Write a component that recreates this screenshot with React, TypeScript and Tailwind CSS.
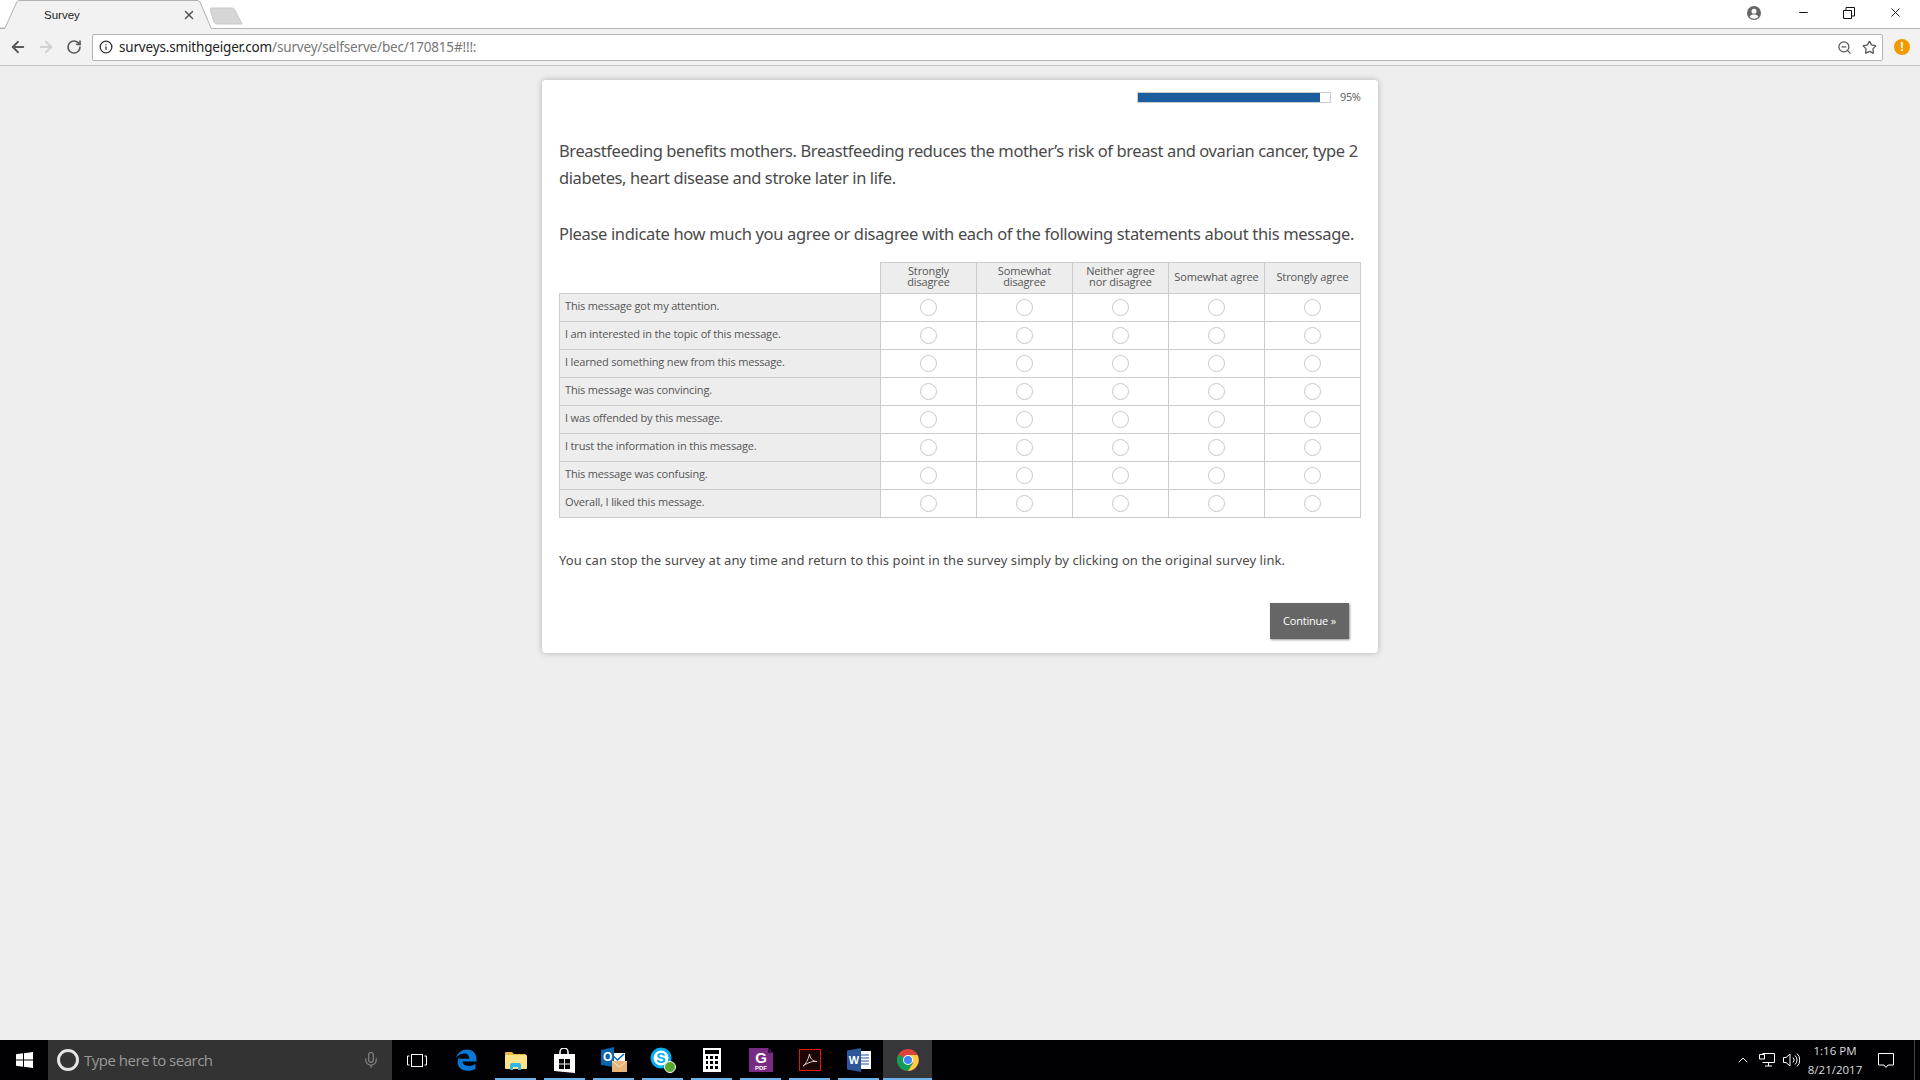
import React from 'react';
import { ArrowLeft, ArrowRight, RotateCw, Info, ZoomOut, Star, X, Minus, Mic, ChevronUp } from 'lucide-react';

const columns = [
  ['Strongly', 'disagree'],
  ['Somewhat', 'disagree'],
  ['Neither agree', 'nor disagree'],
  ['Somewhat agree'],
  ['Strongly agree'],
];

const statements = [
  'This message got my attention.',
  'I am interested in the topic of this message.',
  'I learned something new from this message.',
  'This message was convincing.',
  'I was offended by this message.',
  'I trust the information in this message.',
  'This message was confusing.',
  'Overall, I liked this message.',
];

const WindowsLogo = () => (
  <svg width="17" height="16" viewBox="0 0 17 16" fill="#fff">
    <path d="M0 2.3 7 1.3V7.5H0ZM8 1.2 17 0V7.5H8ZM0 8.5H7V14.7L0 13.7ZM8 8.5H17V16L8 14.8Z" />
  </svg>
);

const EdgeLogo = () => (
  <svg width="22" height="22" viewBox="0 0 22 22">
    <path
      d="M1 9C2.5 3.500 7 .5 12 .5c5.500 0 9.500 4 9.500 9.500v2.500H7.500c.5 4.500 7 6 13 2.500v5c-6 3-14 2.500-17-3-2-3.700-.5-8.500 3-11-1.500 1.500-2 2.500-2.300 3.700h10c.2-3-2-5.200-5-5.200C6 4.500 3 6 1 9Z"
      fill="#0a78d4"
    />
  </svg>
);

const ExplorerIcon = () => (
  <svg width="22" height="19" viewBox="0 0 22 19">
    <path d="M0 2a1 1 0 0 1 1-1h6l2 2h11a1 1 0 0 1 1 1v2H0Z" fill="#e8b93e" />
    <rect y="4" width="22" height="14" rx="1" fill="#fce38a" />
    <path d="M5 19v-5a2 2 0 0 1 2-2h7a2 2 0 0 1 2 2v5h-3v-3H8v3Z" fill="#33b5e5" />
  </svg>
);

const StoreIcon = () => (
  <svg width="21" height="25" viewBox="0 0 21 25">
    <path d="M6 7V4a4 4 0 0 1 8 0v3" fill="none" stroke="#fff" strokeWidth="1.500" />
    <path d="M0 6h21v19l-21-2Z" fill="#fff" />
    <path d="M5 11h5v4.500H5ZM11 11h5v4.500h-5ZM5 16.500h5V21H5ZM11 16.500h5V21h-5Z" fill="#000" />
  </svg>
);

const OutlookIcon = () => (
  <svg width="26" height="26" viewBox="0 0 26 26">
    <rect x="9" y="6" width="15" height="11" fill="#fff" />
    <path d="M10 7l6.500 6L23 7" fill="none" stroke="#0a64ad" strokeWidth="1.500" />
    <path d="M0 3 13 0v20L0 18Z" fill="#0a64ad" />
    <text x="2" y="14" fontSize="12" fontWeight="700" fill="#fff" fontFamily="'Liberation Sans', sans-serif">O</text>
    <rect x="11" y="14" width="15" height="11" fill="#e8b578" />
    <path d="M11 14l7.500 6 7.500-6" fill="none" stroke="#fbe3c2" strokeWidth="1" />
  </svg>
);

const SkypeIcon = () => (
  <div className="relative w-[26px] h-[26px]">
    <svg width="22" height="22" viewBox="0 0 22 22">
      <circle cx="11" cy="11" r="9" fill="#fff" stroke="#00aff0" strokeWidth="3" />
      <text x="11" y="16" fontSize="14" fontWeight="700" textAnchor="middle" fill="#00aff0" fontFamily="'Liberation Sans', sans-serif">S</text>
    </svg>
    <div className="absolute right-0 bottom-0 w-[12px] h-[12px] rounded-full bg-[#5ba82e] border border-white" />
  </div>
);

const CalcIcon = () => (
  <div className="w-[18px] h-[24px] bg-white p-[2px] flex flex-col gap-[2px]">
    <div className="h-[4px] bg-black" />
    <div className="grid grid-cols-3 gap-x-[2px] gap-y-[2px] px-[1px]">
      {Array.from({ length: 9 }).map((_, i) => (
        <div key={i} className="h-[3px] bg-black" />
      ))}
    </div>
  </div>
);

const FoxitIcon = () => (
  <svg width="24" height="24" viewBox="0 0 24 24">
    <path d="M0 0h19l5 5v19H0Z" fill="#7a2b83" />
    <path d="M19 0l5 5h-5Z" fill="#3d1242" />
    <text x="12" y="15" fontSize="15" fontWeight="700" textAnchor="middle" fill="#fff" fontFamily="'Liberation Sans', sans-serif">G</text>
    <text x="12" y="22" fontSize="6" fontWeight="700" textAnchor="middle" fill="#fff" fontFamily="'Liberation Sans', sans-serif">PDF</text>
  </svg>
);

const AcrobatIcon = () => (
  <svg width="22" height="22" viewBox="0 0 22 22">
    <rect x=".5" y=".5" width="21" height="21" fill="#1d0606" stroke="#e0180c" />
    <path d="M4 17c3-2 5-6 6.500-12 .5 4 3 7.500 7.500 7.500-4-.5-8 .5-14 4.500Z" fill="none" stroke="#e8c9c4" strokeWidth="1" />
  </svg>
);

const WordIcon = () => (
  <svg width="24" height="24" viewBox="0 0 24 24">
    <rect x="10" y="3" width="14" height="18" fill="#fff" />
    <path d="M13 7h9M13 10h9M13 13h9M13 16h9" stroke="#2b579a" strokeWidth="1" />
    <path d="M0 2.500 14 0v24L0 21.500Z" fill="#2b579a" />
    <text x="7" y="16" fontSize="11" fontWeight="700" textAnchor="middle" fill="#fff" fontFamily="'Liberation Sans', sans-serif">W</text>
  </svg>
);

const ChromeIcon = () => (
  <svg width="22" height="22" viewBox="0 0 22 22">
    <circle cx="11" cy="11" r="11" fill="#db4437" />
    <path d="M11 11 1.500 5.500A11 11 0 0 0 11 22l5-8Z" fill="#0f9d58" />
    <path d="M11 6h9.500A11 11 0 0 1 11 22l5-8Z" fill="#ffcd40" />
    <circle cx="11" cy="11" r="5" fill="#fff" />
    <circle cx="11" cy="11" r="4" fill="#4285f4" />
  </svg>
);

const ProfileIcon = () => (
  <svg width="14" height="14" viewBox="0 0 14 14">
    <circle cx="7" cy="7" r="7" fill="#666" />
    <circle cx="7" cy="5.200" r="2.500" fill="#fff" />
    <path d="M2.500 10.800C3.500 9 5 8.500 7 8.500s3.500.5 4.500 2.300A5.800 5.800 0 0 1 7 12.800a5.800 5.800 0 0 1-4.500-2Z" fill="#fff" />
  </svg>
);

const taskApps = [
  { key: 'explorer', icon: <ExplorerIcon />, open: true },
  { key: 'store', icon: <StoreIcon />, open: true },
  { key: 'outlook', icon: <OutlookIcon />, open: true },
  { key: 'skype', icon: <SkypeIcon />, open: true },
  { key: 'calc', icon: <CalcIcon />, open: true },
  { key: 'foxit', icon: <FoxitIcon />, open: true },
  { key: 'acrobat', icon: <AcrobatIcon />, open: true },
  { key: 'word', icon: <WordIcon />, open: true },
  { key: 'chrome', icon: <ChromeIcon />, open: true, active: true },
];

const BrowserChrome = () => (
  <div className="font-['Open_Sans',sans-serif]">
    <div className="relative h-[29px] bg-white border-b border-[#b8b8b8] flex items-start">
      <div className="relative w-[212px] h-[29px] shrink-0">
        <svg className="absolute inset-0" width="212" height="29" viewBox="0 0 212 29">
          <path d="M0 28H5L17 1.500Q18 .5 20 .5H197Q199 .5 200 2L211 28" fill="#f2f2f2" stroke="#b0b0b0" />
          <path d="M5 28.500H211" stroke="#f2f2f2" strokeWidth="1.500" />
        </svg>
        <span className="absolute left-[44px] top-[7px] text-[11.500px] text-[#222] font-['Liberation_Sans',sans-serif]">Survey</span>
        <X className="absolute left-[182px] top-[8px] w-[14px] h-[14px] text-[#555]" strokeWidth={2.500} />
      </div>
      <svg className="mt-[7px] -ml-[3px]" width="36" height="18" viewBox="0 0 36 18">
        <path d="M1 2Q1 1 3 1H23Q25 1 26 3L33 17H8Q6 17 5 15Z" fill="#d6d6d6" stroke="#c8c8c8" />
      </svg>
      <div className="ml-auto flex items-center h-[28px]">
        <div className="mr-[36px] -mt-[3px]">
          <ProfileIcon />
        </div>
        <Minus className="w-[13px] h-[13px] text-[#111] mr-[33px] -mt-[3px]" />
        <svg className="mr-[33px] -mt-[3px]" width="12" height="12" viewBox="0 0 12 12" fill="none" stroke="#111">
          <path d="M.5 3.500h8v8h-8ZM3 3.500V.5h8.500V9H8.500" />
        </svg>
        <X className="w-[15px] h-[15px] text-[#111] mr-[17px] -mt-[3px]" strokeWidth={1.500} />
      </div>
    </div>
    <div className="h-[37px] bg-[#f2f2f2] border-b border-[#c4c4c4] flex items-center">
      <div className="w-[92px] shrink-0 flex items-center pl-[9px] gap-[10px]">
        <ArrowLeft className="w-[18px] h-[18px] text-[#5a5a5a]" strokeWidth={2.500} />
        <ArrowRight className="w-[18px] h-[18px] text-[#d0d0d0]" strokeWidth={2.500} />
        <RotateCw className="ml-px w-[16px] h-[16px] text-[#5a5a5a]" strokeWidth={2.500} />
      </div>
      <div className="w-[1791px] h-[27px] bg-white border border-[#b4b4b4] rounded-[2px] flex items-center pl-[6px] pr-[5px]">
        <Info className="w-[14px] h-[14px] text-[#333]" strokeWidth={2.250} />
        <span className="ml-[6px] text-[13.500px] font-['Noto_Sans',sans-serif] tracking-[-0.17px] text-[#222]">
          surveys.smithgeiger.com<span className="text-[#777]">/survey/selfserve/bec/170815#!!!:</span>
        </span>
        <ZoomOut className="ml-auto w-[15px] h-[15px] text-[#555] mr-[10px]" strokeWidth={2} />
        <Star className="w-[15px] h-[15px] text-[#555]" strokeWidth={2} />
      </div>
      <div className="ml-[11px] w-[16px] h-[16px] rounded-full bg-[#f29900] text-white text-[12px] font-bold flex items-center justify-center font-['Liberation_Sans',sans-serif]">!</div>
    </div>
  </div>
);

const SurveyCard = () => (
  <div className="w-[836px] mx-auto mt-[14px] bg-white rounded-[4px] shadow-[0_0_6px_rgba(0,0,0,0.25)] pl-[17px] pr-[16px] pb-[14px] font-['Noto_Sans',sans-serif] text-[#4a4a4a]">
    <div className="flex items-center justify-end h-[35px] pb-[1px] pr-[1px]">
      <div className="w-[194px] h-[11px] border border-[#ccc] bg-white">
        <div className="h-full w-[95%] bg-[#1b5e9e]" />
      </div>
      <span className="ml-[9px] w-[21px] text-[11px] text-[#666] tracking-[-0.4px]">95%</span>
    </div>
    <p className="mt-[22px] -mr-px text-[16.500px] leading-[27px] tracking-[-0.4px]">
      Breastfeeding benefits mothers. Breastfeeding reduces the mother’s risk of breast and ovarian cancer, type 2 diabetes, heart disease and stroke later in life.
    </p>
    <p className="mt-[29px] text-[16.500px] leading-[27px] tracking-[-0.34px]">
      Please indicate how much you agree or disagree with each of the following statements about this message.
    </p>
    <table className="mt-[15px] w-[801px] table-fixed border-collapse text-[11px] text-[#555] font-['Open_Sans',sans-serif]">
      <colgroup>
        <col className="w-[321px]" />
        <col className="w-[96px]" />
        <col className="w-[96px]" />
        <col className="w-[96px]" />
        <col className="w-[96px]" />
        <col className="w-[96px]" />
      </colgroup>
      <thead>
        <tr className="h-[31px]">
          <th />
          {columns.map((lines) => (
            <th key={lines[0] + lines[lines.length - 1]} className="border border-[#ccc] bg-[#ededed] font-normal leading-[11px] tracking-[-0.13px] text-center pt-0 px-0 pb-[4px]">
              {lines.map((line) => (
                <div key={line}>{line}</div>
              ))}
            </th>
          ))}
        </tr>
      </thead>
      <tbody>
        {statements.map((statement) => (
          <tr key={statement} className="h-[28px]">
            <td className="border border-[#ccc] bg-[#ededed] pl-[5px] pb-[2px] tracking-[-0.17px] whitespace-nowrap">{statement}</td>
            {columns.map((lines) => (
              <td key={lines.join(' ')} className="border border-[#ccc] p-0 text-center align-middle">
                <div className="mx-auto w-[17px] h-[17px] rounded-full border border-[#c8c8c8] bg-white" />
              </td>
            ))}
          </tr>
        ))}
      </tbody>
    </table>
    <p className="mt-[29px] text-[13px] leading-[27px] tracking-[0.07px]">
      You can stop the survey at any time and return to this point in the survey simply by clicking on the original survey link.
    </p>
    <div className="flex justify-end mt-[29px] pr-[13px]">
      <button className="w-[79px] h-[36px] bg-[#666] text-white text-[11px] tracking-[-0.2px] shadow-[1px_1px_2px_rgba(0,0,0,0.4)] font-['Open_Sans',sans-serif]">Continue »</button>
    </div>
  </div>
);

const Taskbar = () => (
  <div className="h-[40px] bg-[#010103] flex items-stretch shrink-0 text-white">
    <div className="w-[48px] flex items-center justify-center">
      <WindowsLogo />
    </div>
    <div className="w-[344px] bg-[#333] flex items-center pl-[9px] pr-[12px]">
      <div className="w-[22px] h-[22px] rounded-full border-[3px] border-[#e4e4e4]" />
      <span className="ml-[5px] text-[15px] tracking-[-0.5px] text-[#999] font-['Open_Sans',sans-serif]">Type here to search</span>
      <Mic className="ml-auto w-[18px] h-[18px] text-[#888]" strokeWidth={1.500} />
    </div>
    <div className="w-[49px] flex items-center justify-center">
      <svg width="20" height="13" viewBox="0 0 20 13" fill="none" stroke="#fff">
        <rect x="4.500" y=".5" width="11" height="12" />
        <path d="M2.500 2H.5v9h2M17.500 2h2v9h-2" />
      </svg>
    </div>
    <div className="w-[50px] flex items-center justify-center">
      <EdgeLogo />
    </div>
    {taskApps.map((app) => (
      <div key={app.key} className={`relative w-[49px] flex items-center justify-center ${app.active ? 'bg-[#35373a]' : ''}`}>
        {app.icon}
        <div className={`absolute bottom-0 h-[2px] bg-[#6cb2eb] ${app.active ? 'inset-x-0' : 'inset-x-[4px]'}`} />
      </div>
    ))}
    <div className="ml-auto flex items-center pr-[5px]">
      <ChevronUp className="w-[16px] h-[16px] text-white mr-[8px]" strokeWidth={1.500} />
      <svg className="mr-[8px]" width="16" height="14" viewBox="0 0 16 14" fill="none" stroke="#fff">
        <path d="M3.500 .5H15.500V9.500H3.500M9.500 9.500V13M6 13H13M.5 1.500H5.500V6H.5Z" />
      </svg>
      <svg className="mr-[5px]" width="17" height="14" viewBox="0 0 17 14" fill="none" stroke="#fff">
        <path d="M.5 4.500H3L7 1V13L3 9.500H.5ZM10 4.500a3.500 3.500 0 0 1 0 5M12 2.500a6 6 0 0 1 0 9M14 .5a9 9 0 0 1 0 13" />
      </svg>
      <div className="w-[60px] text-center text-[11.500px] leading-[19px] text-[#ddd] font-['Open_Sans',sans-serif]">
        <div>1:16 PM</div>
        <div>8/21/2017</div>
      </div>
      <svg className="ml-[13px] mr-[20px]" width="16" height="15" viewBox="0 0 16 15" fill="none" stroke="#fff">
        <path d="M.5 .5H15.500V12H10L8 14.500 6 12H.5Z" />
      </svg>
      <div className="w-px h-full bg-[#444]" />
    </div>
  </div>
);

export default function App() {
  return (
    <div className="h-screen flex flex-col bg-[#eeeeee] overflow-hidden">
      <BrowserChrome />
      <main className="flex-1">
        <SurveyCard />
      </main>
      <Taskbar />
    </div>
  );
}
